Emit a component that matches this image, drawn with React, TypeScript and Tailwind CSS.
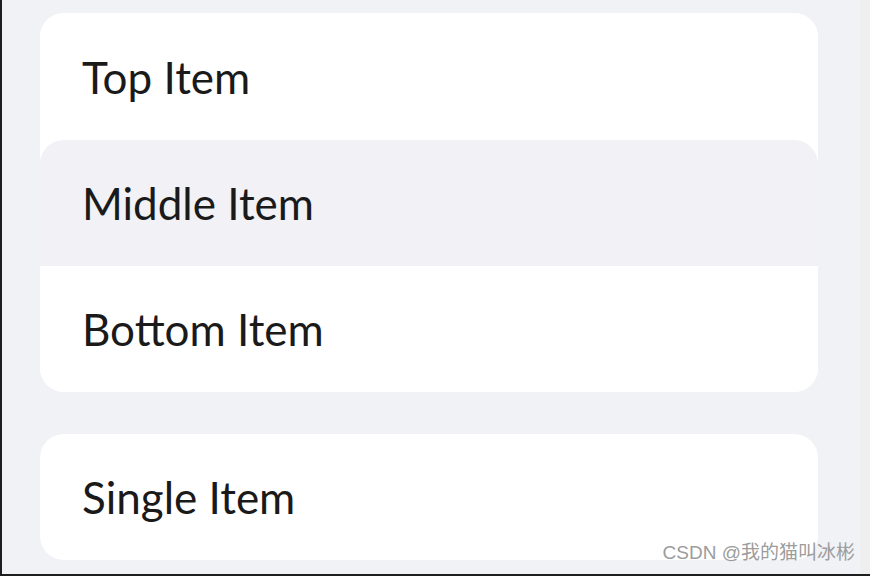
const items = [
  { label: "Top Item", className: "h-[127px] bg-white" },
  { label: "Middle Item", className: "h-[126px] rounded-t-[24px] bg-[#f1f1f6]" },
  { label: "Bottom Item", className: "h-[126px] bg-white" },
]

function Row({ label, className }: { label: string; className: string }) {
  return (
    <div className={`flex items-center pl-[42px] ${className}`}>
      <span className="text-[44px] leading-none text-[#1a1a1a]">{label}</span>
    </div>
  )
}

export default function App() {
  return (
    <div
      className="relative flex h-[576px] w-[870px] overflow-hidden border-b-2 border-[#1e1e1e]"
      style={{ fontFamily: "Lato, 'Noto Sans', sans-serif" }}
    >
      <div className="flex flex-1 flex-col gap-[42px] border-l-2 border-[#1e1e1e] bg-[#f1f2f6] pl-[38px] pr-[42px] pt-[13px]">
        <div className="overflow-hidden rounded-[24px] bg-white">
          {items.map((item) => (
            <Row key={item.label} {...item} />
          ))}
        </div>
        <div className="overflow-hidden rounded-[24px] bg-white">
          <Row label="Single Item" className="h-[126px] bg-white" />
        </div>
      </div>
      <div className="w-[10px] bg-[#efefef]" />
      <span
        className="absolute bottom-[7px] right-[15px] text-[19px] text-[#9c9c9c]"
        style={{ fontFamily: "'Liberation Sans', 'Noto Sans CJK SC', sans-serif" }}
      >
        CSDN @我的猫叫冰彬
      </span>
    </div>
  )
}
